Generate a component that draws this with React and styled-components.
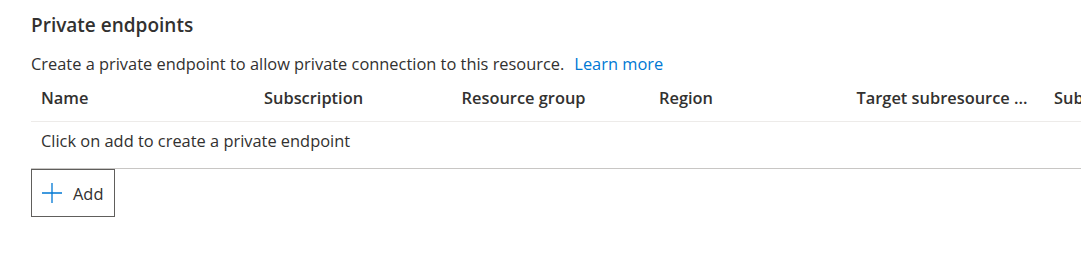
import styled, { createGlobalStyle } from "styled-components";

const GlobalStyle = createGlobalStyle`
    body {
        margin: 0;
        background: #ffffff;
        font-family: "Open Sans", "Noto Sans", Arial, sans-serif;
        color: #323130;
        overflow: hidden;
    }
`;

const Page = styled.div`
    padding: 12px 0 0 31px;
    width: 1300px;
`;

const Title = styled.h2`
    margin: 0;
    font-size: 19px;
    line-height: 26px;
    font-weight: 600;
    color: #323130;
`;

const Description = styled.p`
    margin: 15px 0 0;
    font-size: 16.4px;
    line-height: 22px;
`;

const Link = styled.a`
    color: #0078d4;
    text-decoration: none;
    margin-left: 10px;
`;

const Row = styled.div`
    box-sizing: border-box;
    display: grid;
    grid-template-columns: 223px repeat(5, 197.5px);
    height: ${(p) => p.$height}px;
    align-items: ${(p) => (p.$top ? "start" : "center")};
    padding-top: ${(p) => (p.$top ? "8px" : "0")};
    border-bottom: 1px solid ${(p) => p.$line};
`;

const HeaderCell = styled.div`
    padding-left: 10px;
    font-size: 16.4px;
    line-height: 22px;
    font-weight: 600;
    white-space: nowrap;
`;

const EmptyCell = styled.div`
    grid-column: 1 / -1;
    padding-left: 10px;
    font-size: 16.4px;
    line-height: 22px;
`;

const AddButton = styled.button`
    display: flex;
    align-items: center;
    gap: 11px;
    height: 48px;
    width: 84px;
    padding: 0 0 0 10px;
    background: #ffffff;
    border: 1px solid #605e5c;
    font-family: inherit;
    font-size: 16.4px;
    color: #323130;
`;

const columns = [
    "Name",
    "Subscription",
    "Resource group",
    "Region",
    "Target subresource ...",
    "Subnet",
];

export default function App() {
    return (
        <>
            <GlobalStyle />
            <Page>
                <Title>Private endpoints</Title>
                <Description>
                    Create a private endpoint to allow private connection to this resource.
                    <Link href="#">Learn more</Link>
                </Description>
                <Row $height={47} $line="#edebe9">
                    {columns.map((c) => (
                        <HeaderCell key={c}>{c}</HeaderCell>
                    ))}
                </Row>
                <Row $height={47} $line="#c8c6c4" $top>
                    <EmptyCell>Click on add to create a private endpoint</EmptyCell>
                </Row>
                <AddButton>
                    <svg width="20" height="20" viewBox="0 0 20 20">
                        <path d="M10 0v20M0 10h20" stroke="#0078d4" strokeWidth="1.3" fill="none" />
                    </svg>
                    Add
                </AddButton>
            </Page>
        </>
    );
}
